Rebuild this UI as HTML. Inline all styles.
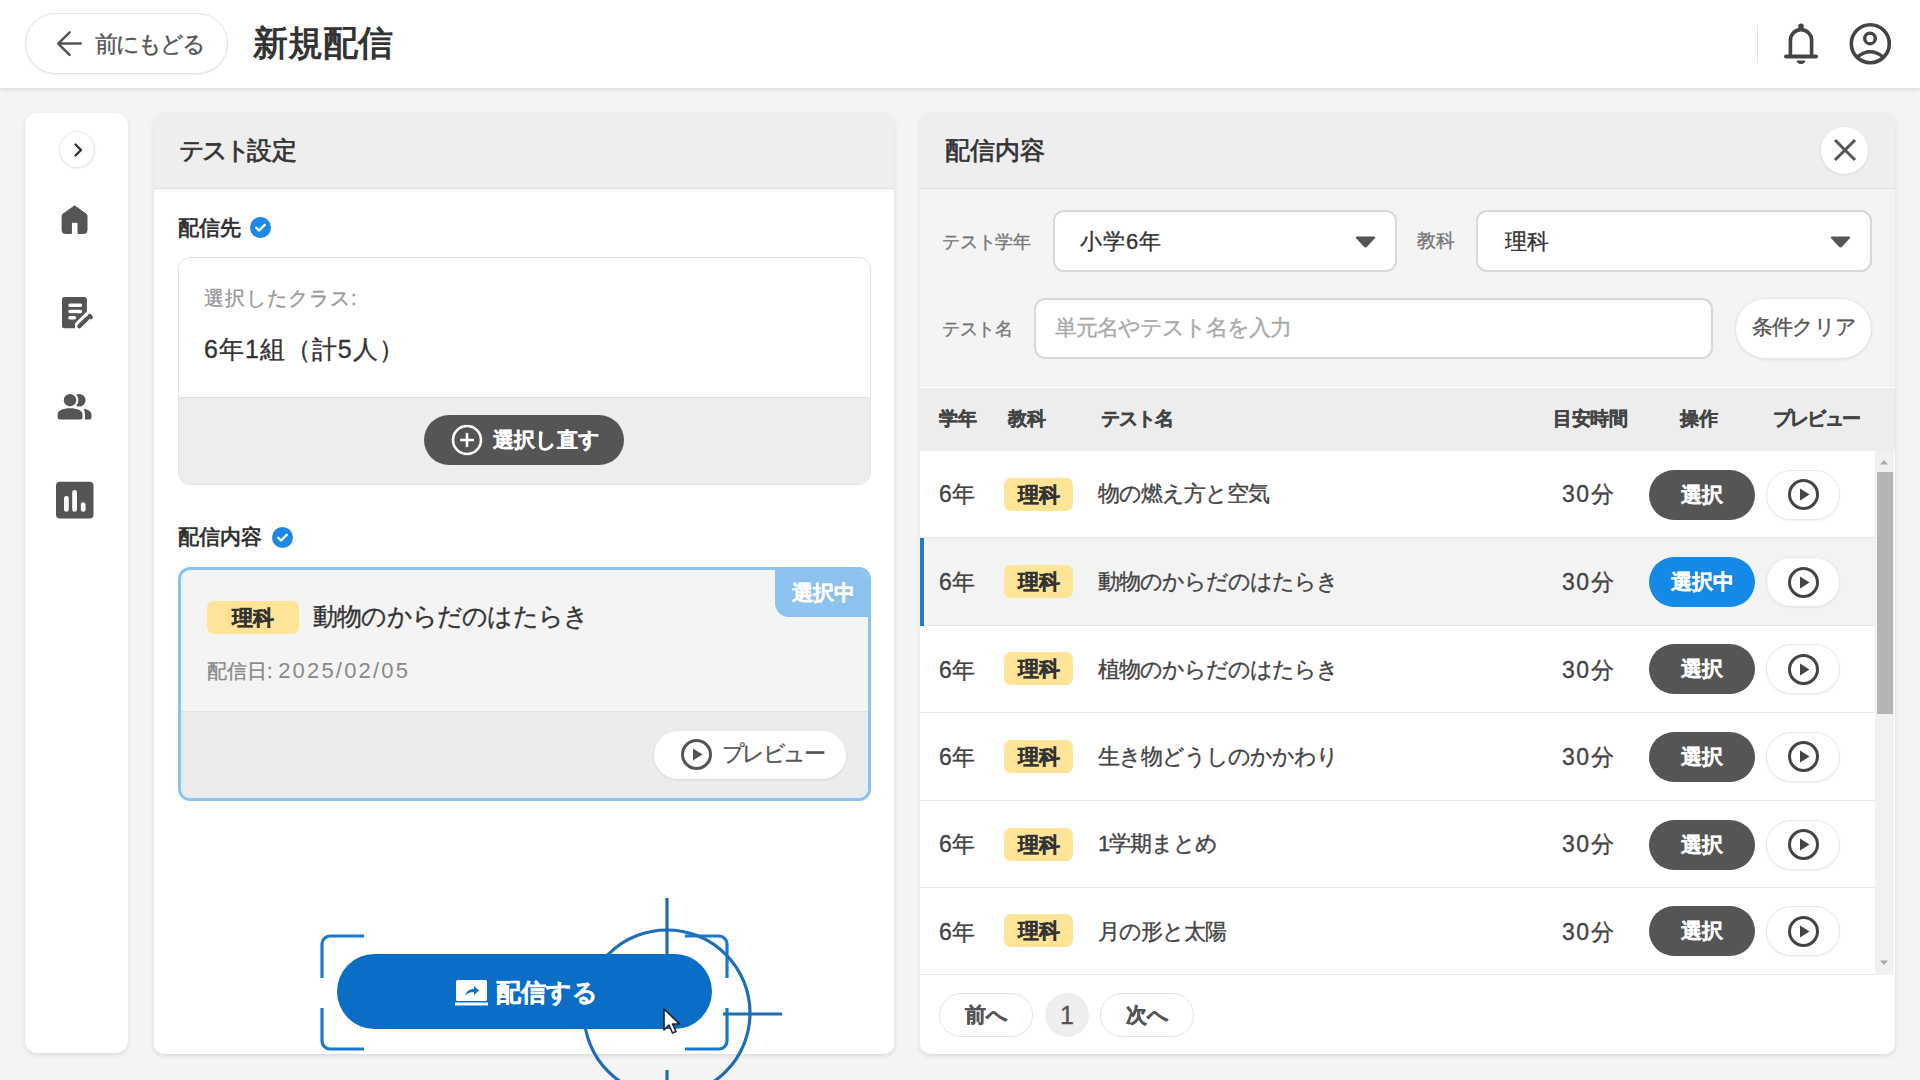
<!DOCTYPE html>
<html lang="ja">
<head>
<meta charset="utf-8">
<style>
*{box-sizing:border-box;margin:0;padding:0}
html,body{width:1920px;height:1080px;overflow:hidden}
body{background:#f4f4f4;font-family:"Liberation Sans",sans-serif;color:#333;position:relative;-webkit-text-stroke:0.35px}
.md{-webkit-text-stroke:0.7px}
.title,.lbl{-webkit-text-stroke:0}
.abs{position:absolute}
.hdr{left:0;top:0;width:1920px;height:88px;background:#fff;box-shadow:0 2px 4px rgba(0,0,0,.10)}
.back{left:25px;top:13px;width:203px;height:61px;border:1px solid #e2e2e2;border-radius:31px;background:#fff;box-shadow:0 1px 2px rgba(0,0,0,.06)}
.back .t{left:69px;top:16px;font-size:23px;letter-spacing:-2px;color:#555;white-space:nowrap;line-height:28px}
.title{left:253px;top:22px;font-size:35px;font-weight:bold;color:#333;line-height:42px;white-space:nowrap}
.vline{left:1757px;top:25px;width:1px;height:38px;background:#e4e4e4}
.side{left:25px;top:113px;width:103px;height:940px;background:#fff;border-radius:12px;box-shadow:0 2px 5px rgba(0,0,0,.10)}
.chev{left:59px;top:131px;width:36px;height:37px;border-radius:50%;background:#fff;border:1px solid #e8e8e8;box-shadow:0 1px 2px rgba(0,0,0,.08)}
.panel{background:#fff;border-radius:10px;box-shadow:0 2px 5px rgba(0,0,0,.11);overflow:hidden}
.ph{left:0;top:0;width:100%;height:76px;background:#eeeeee;border-bottom:1.5px solid #dedede}
.ph .t{left:25px;top:21px;font-size:25px;color:#333;line-height:32px;white-space:nowrap;font-weight:500}
.lbl{font-size:21px;font-weight:bold;color:#333;line-height:26px;white-space:nowrap}
.chk{width:21px;height:21px;border-radius:50%;background:#1e88e5}
.tag{background:#fde497;color:#333;font-weight:bold;border-radius:7px;text-align:center;white-space:nowrap}
.nowrap{white-space:nowrap}
</style>
</head>
<body>
<!-- header -->
<div class="abs hdr">
  <div class="abs back">
    <svg class="abs" style="left:-26px;top:-14px" width="120" height="80" viewBox="0 0 120 80"><path d="M80.7 43.6H58.5M69.6 32.3L58.2 43.6 69.6 54.8" fill="none" stroke="#555" stroke-width="2.5" stroke-linecap="round" stroke-linejoin="round"/></svg>
    <div class="abs t">前にもどる</div>
  </div>
  <div class="abs title">新規配信</div>
  <div class="abs vline"></div>
  <svg class="abs" style="left:1775px;top:15px" width="125" height="60" viewBox="0 0 125 60"><circle cx="26" cy="11.3" r="2.8" fill="#444"/><path d="M15.4 40.5V25.2a10.6 10.6 0 0 1 21.2 0V40.5" fill="none" stroke="#444" stroke-width="3.6"/><path d="M11 41.5h30" stroke="#444" stroke-width="4" stroke-linecap="round"/><path d="M22.8 46.5q3.2 3.2 6.4 0z" fill="#444" stroke="#444" stroke-width="2" stroke-linejoin="round"/><circle cx="95.3" cy="28.7" r="19" fill="none" stroke="#444" stroke-width="3.6"/><circle cx="95" cy="23.4" r="5.3" fill="none" stroke="#444" stroke-width="3.4"/><path d="M82.3 42Q95 31.5 108.3 42" fill="none" stroke="#444" stroke-width="3.5"/></svg>

</div>

<!-- sidebar -->
<div class="abs side"></div>
<div class="abs chev">
  <svg class="abs" style="left:9px;top:9px" width="18" height="18" viewBox="0 0 18 18"><path d="M6.5 3.5l5.5 5.5-5.5 5.5" fill="none" stroke="#333" stroke-width="2.4" stroke-linecap="round" stroke-linejoin="round"/></svg>
</div>
<svg class="abs" style="left:50px;top:195px" width="50" height="45" viewBox="0 0 50 45"><path d="M24.6 10.8L36.4 19.3Q37 19.8 37 20.8V35.3Q37 38.5 33.8 38.5H28V27.3H21.4V38.5H15.3Q12.1 38.5 12.1 35.3V20.8Q12.1 19.8 12.8 19.3Z" fill="#555" stroke="#555" stroke-width="1" stroke-linejoin="round"/></svg>
<svg class="abs" style="left:50px;top:290px" width="50" height="45" viewBox="0 0 50 45"><path d="M14.5 7H34.4Q36.9 7 36.9 9.5V21.5L25 33.3V38.3H14.5Q12 38.3 12 35.8V9.5Q12 7 14.5 7Z" fill="#555"/><path d="M20 15.2h10.5M20 21.5h10.5M20 27.7h4.5" stroke="#fff" stroke-width="3.4" stroke-linecap="round"/><path d="M29.3 36.3L37.2 28.4M39.6 26L40.8 27.2" stroke="#555" stroke-width="4.2" stroke-linecap="round"/></svg>
<svg class="abs" style="left:45px;top:380px" width="60" height="50" viewBox="0 0 60 50"><circle cx="34.2" cy="20.3" r="6.3" fill="#555"/><circle cx="25" cy="20.2" r="8.4" fill="#fff"/><circle cx="25" cy="20.2" r="6.2" fill="#555"/><path d="M38.7 28.7c4.6.8 7.8 2.8 7.8 5.8v3Q46.5 39.4 44.5 39.4H40V34.5c0-2.3-.4-4-1.3-5.8z" fill="#555"/><path d="M14.7 39.4Q12.7 39.4 12.7 37.4V34c0-3.5 5-5.8 12.4-5.8s12.4 2.3 12.4 5.8v3.4Q37.5 39.4 35.5 39.4z" fill="#555"/></svg>
<svg class="abs" style="left:50px;top:475px" width="50" height="50" viewBox="0 0 50 50"><rect x="6" y="6.7" width="37.5" height="36.8" rx="4" fill="#555"/><path d="M16.4 23.4V34.4M24.6 17.4V34.4M33.2 29.7V34.4" stroke="#fff" stroke-width="4.8" stroke-linecap="round"/></svg>

<!-- left panel -->
<div class="abs panel" style="left:154px;top:113px;width:740px;height:941px">
  <div class="abs ph"><div class="abs t md"><span style="letter-spacing:-3.2px">テスト</span>設定</div></div>
</div>
<div class="abs lbl" style="left:178px;top:215px">配信先</div>
<div class="abs chk" style="left:250px;top:217px"><svg width="21" height="21" viewBox="0 0 22 22"><path d="M6.5 11.2l3 3 6-6" fill="none" stroke="#fff" stroke-width="2.4" stroke-linecap="round" stroke-linejoin="round"/></svg></div>

<div class="abs" style="left:178px;top:257px;width:693px;height:228px;border:1px solid #e2e2e2;border-radius:12px;overflow:hidden;background:#fff">
  <div class="abs" style="left:0;top:139px;width:100%;height:89px;background:#ededed;border-top:1px solid #e0e0e0"></div>
</div>
<div class="abs nowrap" style="left:204px;top:285px;font-size:20px;line-height:26px;color:#999;letter-spacing:1px">選択したクラス:</div>
<div class="abs nowrap" style="left:204px;top:333px;font-size:25px;line-height:32px;color:#333;letter-spacing:1px">6年1組（計5人）</div>
<div class="abs" style="left:424px;top:415px;width:200px;height:50px;border-radius:25px;background:#555"></div>
<svg class="abs" style="left:451px;top:424px" width="32" height="32" viewBox="0 0 32 32"><circle cx="16" cy="16" r="14" fill="none" stroke="#fff" stroke-width="2.6"/><path d="M16 9v14M9 16h14" stroke="#fff" stroke-width="2.6"/></svg>
<div class="abs nowrap" style="left:493px;top:426px;font-size:21px;line-height:28px;color:#fff;font-weight:bold">選択し直す</div>

<div class="abs lbl" style="left:178px;top:524px">配信内容</div>
<div class="abs chk" style="left:272px;top:527px"><svg width="21" height="21" viewBox="0 0 22 22"><path d="M6.5 11.2l3 3 6-6" fill="none" stroke="#fff" stroke-width="2.4" stroke-linecap="round" stroke-linejoin="round"/></svg></div>

<div class="abs" style="left:178px;top:567px;width:693px;height:234px;border:3px solid #8ec2ee;border-radius:12px;overflow:hidden;background:#f4f4f4">
  <div class="abs" style="left:0;top:141px;width:100%;height:90px;background:#ececec;border-top:1px solid #e2e2e2"></div>
  <div class="abs" style="right:0;top:0;width:93px;height:47px;background:#8ec2ee;border-bottom-left-radius:14px"></div>
</div>
<div class="abs nowrap" style="left:792px;top:579px;font-size:21px;line-height:28px;color:#fff;font-weight:bold">選択中</div>
<div class="abs tag" style="left:207px;top:601px;width:92px;height:33px;font-size:21px;line-height:33px">理科</div>
<div class="abs nowrap" style="left:313px;top:600px;font-size:25px;line-height:32px;color:#333;letter-spacing:-0.8px">動物のからだのはたらき</div>
<div class="abs nowrap" style="left:207px;top:657px;font-size:20px;line-height:28px;color:#888">配信日: <span style="font-size:22px;letter-spacing:2.2px;-webkit-text-stroke:0">2025/02/05</span></div>
<div class="abs" style="left:654px;top:731px;width:192px;height:48px;border-radius:24px;background:#fff;box-shadow:0 1px 3px rgba(0,0,0,.10)"></div>
<svg class="abs" style="left:680px;top:738px" width="33" height="33" viewBox="0 0 33 33"><circle cx="16.5" cy="16.5" r="14" fill="none" stroke="#555" stroke-width="3"/><path d="M13 10.5v12l9.5-6z" fill="#555"/></svg>
<div class="abs nowrap" style="left:722px;top:740px;font-size:22px;line-height:28px;color:#555;letter-spacing:-2.6px">プレビュー</div>

<!-- click effect -->
<svg class="abs" style="left:300px;top:880px" width="500" height="200" viewBox="0 0 500 200">
  <g fill="none" stroke="#1a78cc" stroke-width="3.2" stroke-linecap="butt">
    <path d="M64 56H30a8 8 0 0 0-8 8v34"/>
    <path d="M22 128v33a8 8 0 0 0 8 8h34"/>
    <path d="M385 56h34a8 8 0 0 1 8 8v34"/>
    <path d="M427 128v33a8 8 0 0 1-8 8h-34"/>
  </g>
  <g fill="none" stroke="#1f6eb5" stroke-width="3.2">
    <circle cx="367" cy="133" r="83"/>
    <path d="M367 18v58M423 134h59M367 190v12"/>
  </g>
</svg>
<div class="abs" style="left:337px;top:954px;width:375px;height:75px;border-radius:38px;background:#0a6dc6"></div>
<svg class="abs" style="left:455px;top:979px" width="33" height="27" viewBox="0 0 33 27"><rect x="1" y="1" width="31" height="21" rx="1.5" fill="#fff"/><rect x="0" y="23.5" width="33" height="3" fill="#fff"/><path d="M10 17c1-4.5 4.5-7 9-7V7l5 4.5-5 4.5v-3c-3.5 0-6.5 1-9 3.5z" fill="#0a6dc6"/></svg>
<div class="abs nowrap" style="left:496px;top:977px;font-size:25px;line-height:30px;color:#fff;font-weight:bold">配信する</div>
<svg class="abs" style="left:662px;top:1007px" width="22" height="30" viewBox="0 0 22 30"><path d="M2 2v21l5-5 3.5 8 3.5-1.5-3.5-7.5h7z" fill="#fff" stroke="#222" stroke-width="1.6" stroke-linejoin="round"/></svg>

<!-- right panel -->
<div class="abs panel" style="left:920px;top:113px;width:975px;height:941px;background:#fff">
  <div class="abs ph"><div class="abs t md">配信内容</div></div>
  <div class="abs" style="left:0;top:76px;width:975px;height:198px;background:#f4f4f4"></div>
</div>
<div class="abs" style="left:1821px;top:127px;width:47px;height:47px;border-radius:50%;background:#fff;box-shadow:0 1px 3px rgba(0,0,0,.10)"></div>
<svg class="abs" style="left:1833px;top:138px" width="24" height="24" viewBox="0 0 24 24"><path d="M2 2l20 20M22 2L2 22" stroke="#555" stroke-width="3"/></svg>

<div class="abs nowrap" style="left:942px;top:230px;font-size:18px;line-height:24px;color:#777;letter-spacing:-0.2px">テスト学年</div>
<div class="abs" style="left:1053px;top:210px;width:344px;height:62px;border:2px solid #d8d8d8;border-radius:11px;background:#fff"></div>
<div class="abs nowrap" style="left:1080px;top:228px;font-size:22px;line-height:28px;color:#333;letter-spacing:1px">小学6年</div>
<svg class="abs" style="left:1355px;top:235px" width="21" height="13" viewBox="0 0 21 13"><path d="M2 1.5h17c1 0 1.5 1 .8 1.8l-7.8 8.5c-.8.8-2.2.8-3 0L1.2 3.3C.5 2.5 1 1.5 2 1.5z" fill="#555"/></svg>

<div class="abs nowrap" style="left:1417px;top:229px;font-size:19px;line-height:24px;color:#777">教科</div>
<div class="abs" style="left:1476px;top:210px;width:396px;height:62px;border:2px solid #d8d8d8;border-radius:11px;background:#fff"></div>
<div class="abs nowrap" style="left:1505px;top:228px;font-size:22px;line-height:28px;color:#333">理科</div>
<svg class="abs" style="left:1830px;top:235px" width="21" height="13" viewBox="0 0 21 13"><path d="M2 1.5h17c1 0 1.5 1 .8 1.8l-7.8 8.5c-.8.8-2.2.8-3 0L1.2 3.3C.5 2.5 1 1.5 2 1.5z" fill="#555"/></svg>

<div class="abs nowrap" style="left:942px;top:317px;font-size:18px;line-height:24px;color:#777;letter-spacing:-0.5px">テスト名</div>
<div class="abs" style="left:1034px;top:298px;width:679px;height:61px;border:2px solid #d8d8d8;border-radius:11px;background:#fff"></div>
<div class="abs nowrap" style="left:1055px;top:314px;font-size:22px;line-height:28px;color:#aaa;letter-spacing:-1px">単元名やテスト名を入力</div>
<div class="abs" style="left:1735px;top:298px;width:137px;height:61px;border-radius:31px;border:1px solid #e6e6e6;background:#fff;box-shadow:0 1px 3px rgba(0,0,0,.08)"></div>
<div class="abs nowrap" style="left:1752px;top:313px;font-size:21px;line-height:28px;color:#555;letter-spacing:-0.8px">条件クリア</div>

<div class="abs" style="left:920px;top:388px;width:975px;height:63px;background:#ededed"></div>
<div class="abs nowrap" style="left:939px;top:406px;font-size:19px;line-height:26px;color:#444;font-weight:bold;letter-spacing:0">学年</div>
<div class="abs nowrap" style="left:1008px;top:406px;font-size:19px;line-height:26px;color:#444;font-weight:bold;letter-spacing:0">教科</div>
<div class="abs nowrap" style="left:1101px;top:406px;font-size:19px;line-height:26px;color:#444;font-weight:bold;letter-spacing:-1px">テスト名</div>
<div class="abs nowrap" style="left:1553px;top:406px;font-size:19px;line-height:26px;color:#444;font-weight:bold;letter-spacing:-0.5px">目安時間</div>
<div class="abs nowrap" style="left:1680px;top:406px;font-size:19px;line-height:26px;color:#444;font-weight:bold;letter-spacing:0">操作</div>
<div class="abs nowrap" style="left:1773px;top:406px;font-size:19px;line-height:26px;color:#444;font-weight:bold;letter-spacing:-1.8px">プレビュー</div>
<div class="abs" style="left:920px;top:451px;width:955px;height:87px;background:#fff;border-bottom:1px solid #e6e6e6"></div>
<div class="abs nowrap" style="left:939px;top:480px;font-size:23px;line-height:28px;color:#444">6年</div>
<div class="abs tag" style="left:1004px;top:478px;width:69px;height:33px;font-size:21px;line-height:33px">理科</div>
<div class="abs nowrap" style="left:1098px;top:480px;font-size:22px;line-height:28px;color:#444;letter-spacing:-1px">物の燃え方と空気</div>
<div class="abs nowrap" style="left:1562px;top:480px;font-size:23px;line-height:28px;color:#444;letter-spacing:1.5px">30分</div>
<div class="abs" style="left:1649px;top:470px;width:106px;height:50px;border-radius:25px;background:#555;color:#fff;font-weight:bold;font-size:21px;line-height:50px;text-align:center">選択</div>
<div class="abs" style="left:1766px;top:470px;width:74px;height:50px;border-radius:25px;background:#fff;border:1px solid #e8e8e8;box-shadow:0 1px 2px rgba(0,0,0,.06)"></div>
<svg class="abs" style="left:1787px;top:478px" width="33" height="33" viewBox="0 0 33 33"><circle cx="16.5" cy="16.5" r="14" fill="none" stroke="#444" stroke-width="3"/><path d="M13 10.5v12l9.5-6z" fill="#444"/></svg>
<div class="abs" style="left:920px;top:538px;width:955px;height:88px;background:#f3f3f3;border-bottom:1px solid #e6e6e6"></div>
<div class="abs" style="left:920px;top:538px;width:4px;height:88px;background:#1e7fd0"></div>
<div class="abs nowrap" style="left:939px;top:568px;font-size:23px;line-height:28px;color:#444">6年</div>
<div class="abs tag" style="left:1004px;top:565px;width:69px;height:33px;font-size:21px;line-height:33px">理科</div>
<div class="abs nowrap" style="left:1098px;top:568px;font-size:22px;line-height:28px;color:#444;letter-spacing:-1px">動物のからだのはたらき</div>
<div class="abs nowrap" style="left:1562px;top:568px;font-size:23px;line-height:28px;color:#444;letter-spacing:1.5px">30分</div>
<div class="abs" style="left:1649px;top:557px;width:106px;height:50px;border-radius:25px;background:#1589e6;color:#fff;font-weight:bold;font-size:21px;line-height:50px;text-align:center">選択中</div>
<div class="abs" style="left:1766px;top:557px;width:74px;height:50px;border-radius:25px;background:#fff;border:1px solid #e8e8e8;box-shadow:0 1px 2px rgba(0,0,0,.06)"></div>
<svg class="abs" style="left:1787px;top:566px" width="33" height="33" viewBox="0 0 33 33"><circle cx="16.5" cy="16.5" r="14" fill="none" stroke="#444" stroke-width="3"/><path d="M13 10.5v12l9.5-6z" fill="#444"/></svg>
<div class="abs" style="left:920px;top:626px;width:955px;height:87px;background:#fff;border-bottom:1px solid #e6e6e6"></div>
<div class="abs nowrap" style="left:939px;top:656px;font-size:23px;line-height:28px;color:#444">6年</div>
<div class="abs tag" style="left:1004px;top:652px;width:69px;height:33px;font-size:21px;line-height:33px">理科</div>
<div class="abs nowrap" style="left:1098px;top:656px;font-size:22px;line-height:28px;color:#444;letter-spacing:-1px">植物のからだのはたらき</div>
<div class="abs nowrap" style="left:1562px;top:656px;font-size:23px;line-height:28px;color:#444;letter-spacing:1.5px">30分</div>
<div class="abs" style="left:1649px;top:644px;width:106px;height:50px;border-radius:25px;background:#555;color:#fff;font-weight:bold;font-size:21px;line-height:50px;text-align:center">選択</div>
<div class="abs" style="left:1766px;top:644px;width:74px;height:50px;border-radius:25px;background:#fff;border:1px solid #e8e8e8;box-shadow:0 1px 2px rgba(0,0,0,.06)"></div>
<svg class="abs" style="left:1787px;top:653px" width="33" height="33" viewBox="0 0 33 33"><circle cx="16.5" cy="16.5" r="14" fill="none" stroke="#444" stroke-width="3"/><path d="M13 10.5v12l9.5-6z" fill="#444"/></svg>
<div class="abs" style="left:920px;top:713px;width:955px;height:88px;background:#fff;border-bottom:1px solid #e6e6e6"></div>
<div class="abs nowrap" style="left:939px;top:743px;font-size:23px;line-height:28px;color:#444">6年</div>
<div class="abs tag" style="left:1004px;top:740px;width:69px;height:33px;font-size:21px;line-height:33px">理科</div>
<div class="abs nowrap" style="left:1098px;top:743px;font-size:22px;line-height:28px;color:#444;letter-spacing:-1px">生き物どうしのかかわり</div>
<div class="abs nowrap" style="left:1562px;top:743px;font-size:23px;line-height:28px;color:#444;letter-spacing:1.5px">30分</div>
<div class="abs" style="left:1649px;top:732px;width:106px;height:50px;border-radius:25px;background:#555;color:#fff;font-weight:bold;font-size:21px;line-height:50px;text-align:center">選択</div>
<div class="abs" style="left:1766px;top:732px;width:74px;height:50px;border-radius:25px;background:#fff;border:1px solid #e8e8e8;box-shadow:0 1px 2px rgba(0,0,0,.06)"></div>
<svg class="abs" style="left:1787px;top:740px" width="33" height="33" viewBox="0 0 33 33"><circle cx="16.5" cy="16.5" r="14" fill="none" stroke="#444" stroke-width="3"/><path d="M13 10.5v12l9.5-6z" fill="#444"/></svg>
<div class="abs" style="left:920px;top:801px;width:955px;height:87px;background:#fff;border-bottom:1px solid #e6e6e6"></div>
<div class="abs nowrap" style="left:939px;top:830px;font-size:23px;line-height:28px;color:#444">6年</div>
<div class="abs tag" style="left:1004px;top:828px;width:69px;height:33px;font-size:21px;line-height:33px">理科</div>
<div class="abs nowrap" style="left:1098px;top:830px;font-size:22px;line-height:28px;color:#444;letter-spacing:-1px">1学期まとめ</div>
<div class="abs nowrap" style="left:1562px;top:830px;font-size:23px;line-height:28px;color:#444;letter-spacing:1.5px">30分</div>
<div class="abs" style="left:1649px;top:820px;width:106px;height:50px;border-radius:25px;background:#555;color:#fff;font-weight:bold;font-size:21px;line-height:50px;text-align:center">選択</div>
<div class="abs" style="left:1766px;top:820px;width:74px;height:50px;border-radius:25px;background:#fff;border:1px solid #e8e8e8;box-shadow:0 1px 2px rgba(0,0,0,.06)"></div>
<svg class="abs" style="left:1787px;top:828px" width="33" height="33" viewBox="0 0 33 33"><circle cx="16.5" cy="16.5" r="14" fill="none" stroke="#444" stroke-width="3"/><path d="M13 10.5v12l9.5-6z" fill="#444"/></svg>
<div class="abs" style="left:920px;top:888px;width:955px;height:87px;background:#fff;border-bottom:1px solid #e6e6e6"></div>
<div class="abs nowrap" style="left:939px;top:918px;font-size:23px;line-height:28px;color:#444">6年</div>
<div class="abs tag" style="left:1004px;top:914px;width:69px;height:33px;font-size:21px;line-height:33px">理科</div>
<div class="abs nowrap" style="left:1098px;top:918px;font-size:22px;line-height:28px;color:#444;letter-spacing:-1px">月の形と太陽</div>
<div class="abs nowrap" style="left:1562px;top:918px;font-size:23px;line-height:28px;color:#444;letter-spacing:1.5px">30分</div>
<div class="abs" style="left:1649px;top:906px;width:106px;height:50px;border-radius:25px;background:#555;color:#fff;font-weight:bold;font-size:21px;line-height:50px;text-align:center">選択</div>
<div class="abs" style="left:1766px;top:906px;width:74px;height:50px;border-radius:25px;background:#fff;border:1px solid #e8e8e8;box-shadow:0 1px 2px rgba(0,0,0,.06)"></div>
<svg class="abs" style="left:1787px;top:915px" width="33" height="33" viewBox="0 0 33 33"><circle cx="16.5" cy="16.5" r="14" fill="none" stroke="#444" stroke-width="3"/><path d="M13 10.5v12l9.5-6z" fill="#444"/></svg>

<div class="abs" style="left:1875px;top:451px;width:19px;height:524px;background:#f1f1f1"></div>
<div class="abs" style="left:1877px;top:472px;width:16px;height:242px;background:#b3b3b3"></div>
<svg class="abs" style="left:1879px;top:458px" width="10" height="8" viewBox="0 0 10 8"><path d="M1 6.5L5 2l4 4.5z" fill="#a8a8a8"/></svg>
<svg class="abs" style="left:1879px;top:959px" width="10" height="8" viewBox="0 0 10 8"><path d="M1 1.5L5 6l4-4.5z" fill="#a8a8a8"/></svg>

<div class="abs" style="left:939px;top:993px;width:94px;height:44px;border-radius:22px;border:1px solid #e4e4e4;background:#fff;font-size:21px;line-height:42px;color:#555;font-weight:bold;text-align:center">前へ</div>
<div class="abs" style="left:1045px;top:993px;width:44px;height:44px;border-radius:50%;background:#eeeeee;font-size:25px;line-height:44px;color:#555;text-align:center">1</div>
<div class="abs" style="left:1100px;top:993px;width:94px;height:44px;border-radius:22px;border:1px solid #e4e4e4;background:#fff;font-size:21px;line-height:42px;color:#555;font-weight:bold;text-align:center">次へ</div>

</body>
</html>
